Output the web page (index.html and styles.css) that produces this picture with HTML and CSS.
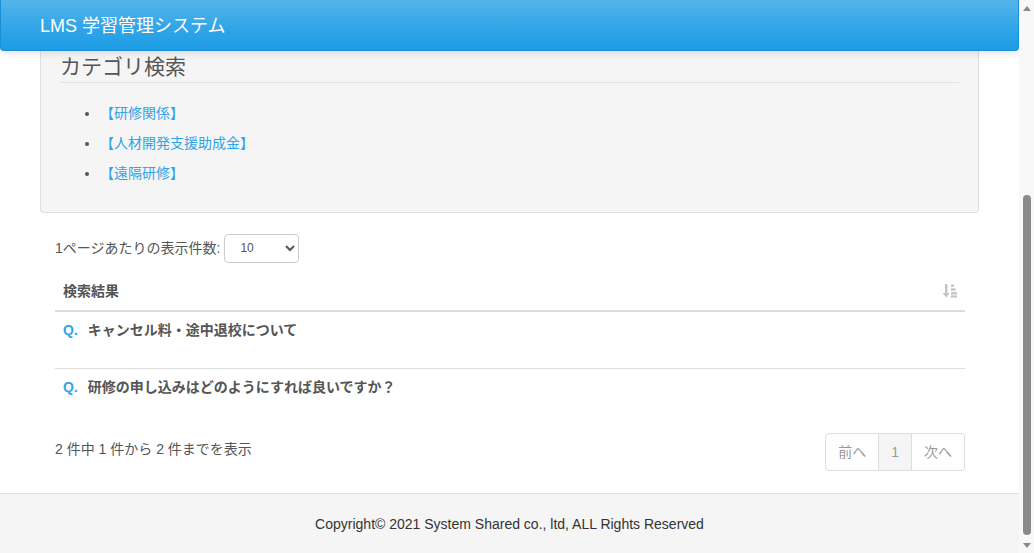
FILE: index.html
```html
<!DOCTYPE html>
<html lang="ja">
<head>
<meta charset="utf-8">
<title>LMS 学習管理システム</title>
<link rel="stylesheet" href="styles.css">
</head>
<body>
<div class="window">
  <div class="page">
    <nav class="navbar">
      <a class="brand" href="#">LMS 学習管理システム</a>
    </nav>
    <main class="container">
      <div class="panel">
        <h2 class="panel-title">カテゴリ検索</h2>
        <ul class="cat-list">
          <li><a href="#">【研修関係】</a></li>
          <li><a href="#">【人材開発支援助成金】</a></li>
          <li><a href="#">【遠隔研修】</a></li>
        </ul>
      </div>
      <div class="results">
        <div class="length-row">
          <span>1ページあたりの表示件数:</span>
          <select class="length-select">
            <option>10</option>
            <option>25</option>
            <option>50</option>
          </select>
        </div>
        <table class="faq-table">
          <thead>
            <tr>
              <th>
                <div class="th-inner">
                  <span>検索結果</span>
                  <svg class="sort-icon" width="16" height="14" viewBox="0 0 16 14">
                    <path d="M3 0h2.4v9h2.4L4.2 13.6 0.6 9H3z" fill="#c4c4c4"/>
                    <rect x="9" y="0.5" width="3" height="2.4" fill="#c4c4c4"/>
                    <rect x="9" y="4.3" width="4.5" height="2.4" fill="#c4c4c4"/>
                    <rect x="9" y="8.1" width="6" height="2.4" fill="#c4c4c4"/>
                    <rect x="9" y="11.4" width="6" height="2.2" fill="#c4c4c4"/>
                  </svg>
                </div>
              </th>
            </tr>
          </thead>
          <tbody>
            <tr><td><span class="q">Q.</span><a class="question" href="#">キャンセル料・途中退校について</a></td></tr>
            <tr><td><span class="q">Q.</span><a class="question" href="#">研修の申し込みはどのようにすれば良いですか？</a></td></tr>
          </tbody>
        </table>
        <div class="bottom-row">
          <div class="info">2 件中 1 件から 2 件までを表示</div>
          <ul class="pagination">
            <li class="disabled"><a href="#">前へ</a></li>
            <li class="active"><a href="#">1</a></li>
            <li class="disabled"><a href="#">次へ</a></li>
          </ul>
        </div>
      </div>
    </main>
    <footer class="footer">Copyright© 2021 System Shared co., ltd, ALL Rights Reserved</footer>
  </div>
  <div class="scrollbar" aria-hidden="true">
    <div class="sb-btn"><span class="arrow-up"></span></div>
    <div class="sb-track"><div class="sb-thumb"></div></div>
    <div class="sb-btn"><span class="arrow-down"></span></div>
  </div>
</div>
</body>
</html>
```

FILE: styles.css
```css
html, body {
  margin: 0;
  height: 100%;
  overflow: hidden;
}
body {
  font-family: "Liberation Sans", Arial, "Noto Sans CJK JP", sans-serif;
  font-size: 14px;
  line-height: 20px;
  color: #555;
  background: #fff;
}
a {
  color: #2fa4e7;
  text-decoration: none;
}
.window {
  display: flex;
  height: 553px;
}
.page {
  flex: 1;
  display: flex;
  flex-direction: column;
  overflow: hidden;
}
.navbar {
  position: relative;
  z-index: 2;
  flex: none;
  height: 51px;
  box-sizing: border-box;
  background: linear-gradient(#54b4eb, #2fa4e7 60%, #1d9ce5);
  border: 1px solid #1b8fd6;
  border-top: 0;
  border-radius: 0 0 4px 4px;
  box-shadow: 0 2px 8px rgba(0, 0, 0, 0.12);
  display: flex;
  align-items: center;
}
.brand {
  color: #fff;
  font-size: 18px;
  line-height: 20px;
  padding-left: 39px;
  padding-top: 1px;
}
.container {
  flex: 1;
  margin: 0 40px;
}
.panel {
  background: #f5f5f5;
  border: 1px solid #e0e0e0;
  border-top: 0;
  border-radius: 0 0 4px 4px;
  padding: 1px 19px 24px;
}
.panel-title {
  margin: 0;
  font-size: 21px;
  font-weight: normal;
  line-height: 30px;
  color: #555;
  border-bottom: 1px solid #e2e2e2;
}
.cat-list {
  margin: 15px 0 0;
  padding-left: 40px;
}
.cat-list li {
  line-height: 30px;
}
.results {
  padding: 0 14px 0 15px;
}
.length-row {
  display: flex;
  align-items: center;
  gap: 4px;
  margin-top: 21px;
  height: 28px;
}
.length-select {
  width: 75px;
  height: 29px;
  border: 1px solid #ccc;
  border-radius: 4px;
  background: #fff;
  font-family: "Liberation Sans", Arial, sans-serif;
  font-size: 12px;
  color: #555;
  padding: 0 0 0 11px;
}
.faq-table {
  width: 100%;
  border-collapse: collapse;
  margin-top: 11px;
}
.faq-table th {
  text-align: left;
  padding: 8px 8px 9px;
  border-bottom: 2px solid #ddd;
  font-weight: bold;
}
.th-inner {
  display: flex;
  justify-content: space-between;
  align-items: center;
}
.sort-icon {
  display: block;
  margin-right: -1px;
}
.faq-table td {
  padding: 8px 8px 28px;
  font-weight: bold;
}
.faq-table tbody tr + tr td {
  border-top: 1px solid #ddd;
}
.q {
  color: #2fa4e7;
  margin-right: 10px;
}
.question {
  color: #555;
}
.bottom-row {
  display: flex;
  justify-content: space-between;
  align-items: flex-start;
  margin-top: 8px;
}
.info {
  padding-top: 6px;
}
.pagination {
  display: flex;
  list-style: none;
  margin: 0;
  padding: 0;
}
.pagination a {
  display: block;
  padding: 8px 12px;
  line-height: 20px;
  border: 1px solid #ddd;
  margin-left: -1px;
  background: #fff;
  color: #999;
}
.pagination li:first-child a {
  border-radius: 4px 0 0 4px;
}
.pagination li:last-child a {
  border-radius: 0 4px 4px 0;
}
.pagination .active a {
  background: #f5f5f5;
  color: #999;
}
.footer {
  flex: none;
  border-top: 1px solid #ddd;
  background: #f5f5f5;
  color: #333;
  text-align: center;
  padding: 20px 0 19px;
}
.scrollbar {
  flex: none;
  width: 15px;
  background: #f8f8f8;
  display: flex;
  flex-direction: column;
  align-items: center;
}
.sb-btn {
  height: 15px;
  width: 15px;
  display: flex;
  align-items: center;
  justify-content: center;
}
.arrow-up {
  width: 0;
  height: 0;
  border-left: 4.5px solid transparent;
  border-right: 4.5px solid transparent;
  border-bottom: 5px solid #8a8a8a;
  margin-top: 1px;
}
.arrow-down {
  width: 0;
  height: 0;
  border-left: 4.5px solid transparent;
  border-right: 4.5px solid transparent;
  border-top: 5px solid #8a8a8a;
  margin-bottom: 1px;
}
.sb-track {
  flex: 1;
  width: 15px;
  display: flex;
  justify-content: center;
  padding-top: 180px;
  box-sizing: border-box;
}
.sb-thumb {
  width: 8px;
  height: 340px;
  border-radius: 4px;
  background: #8a8a8a;
}
```
